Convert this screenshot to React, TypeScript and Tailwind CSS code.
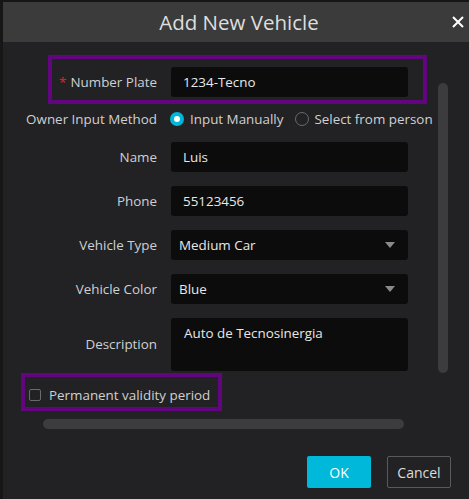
import React from 'react';

const font = { fontFamily: '"Open Sans", "Noto Sans", Arial, sans-serif' };

function Field({ label, children, required }: { label: string; children: React.ReactNode; required?: boolean }) {
  return (
    <div className="flex items-center">
      <div className="w-[154px] shrink-0 whitespace-nowrap text-right text-[13.4px] text-[#cfd0d2]">
        {required && <span className="mr-[4px] text-[#e02424]">*</span>}
        {label}
      </div>
      <div className="ml-[14px] w-[237px]">{children}</div>
    </div>
  );
}

function TextBox({ value }: { value: string }) {
  return (
    <div className="flex h-[30px] items-center rounded-[3px] bg-[#0c0c0c] px-[12px] text-[13.4px] text-[#e8e8e8]">
      {value}
    </div>
  );
}

function SelectBox({ value }: { value: string }) {
  return (
    <div className="flex h-[30px] items-center justify-between rounded-[3px] bg-[#0c0c0c] pl-[8px] pr-[13px] text-[13.4px] text-[#e8e8e8]">
      <span>{value}</span>
      <svg width="10" height="6" viewBox="0 0 10 6" aria-hidden="true">
        <path d="M0 0h10L5 6z" fill="#8a8a8a" />
      </svg>
    </div>
  );
}

export default function App() {
  return (
    <div className="h-[499px] w-[469px] bg-[#161616] pl-[3px] pt-[2px]" style={font}>
      <div className="relative flex h-full flex-col bg-[#222224]">
        {/* Header */}
        <div className="relative flex h-[40px] shrink-0 items-center justify-center bg-[#3b3b3b]">
          <span className="ml-[6px] text-[20.5px] text-[#dedede]">Add New Vehicle</span>
          <svg className="absolute right-[5px] top-[14px]" width="12" height="12" viewBox="0 0 12 12" aria-hidden="true">
            <path d="M1 1l10 10M11 1L1 11" stroke="#ffffff" strokeWidth="2" />
          </svg>
        </div>

        {/* Form */}
        <div className="flex flex-col pt-[25px]">
          <Field label="Number Plate" required>
            <TextBox value="1234-Tecno" />
          </Field>

          <div className="flex h-[45px] items-center">
            <div className="w-[154px] shrink-0 whitespace-nowrap text-right text-[13.4px] text-[#cfd0d2]">Owner Input Method</div>
            <div className="ml-[13px] flex items-center text-[13.4px] text-[#cfd0d2]">
              <span className="flex h-[14px] w-[14px] items-center justify-center rounded-full bg-[#00b6d9]">
                <span className="h-[6px] w-[6px] rounded-full bg-white" />
              </span>
              <span className="ml-[6px] whitespace-nowrap">Input Manually</span>
              <span className="ml-[12px] h-[14px] w-[14px] rounded-full border border-[#6a6a6a]" />
              <span className="ml-[5px] whitespace-nowrap">Select from person</span>
              <span className="ml-[5px] h-[14px] w-[1px] shrink-0 bg-[#2f49c8]" />
            </div>
          </div>

          <div className="flex flex-col gap-[14px]">
            <Field label="Name">
              <TextBox value="Luis" />
            </Field>
            <Field label="Phone">
              <TextBox value="55123456" />
            </Field>
            <Field label="Vehicle Type">
              <SelectBox value="Medium Car" />
            </Field>
            <Field label="Vehicle Color">
              <SelectBox value="Blue" />
            </Field>
            <Field label="Description">
              <div className="h-[53px] rounded-[3px] bg-[#0c0c0c] px-[13px] pt-[5px] text-[13.4px] text-[#e8e8e8]">
                Auto de Tecnosinergia
              </div>
            </Field>
          </div>

          <div className="ml-[26px] mt-[14px] flex items-center">
            <span className="h-[12px] w-[12px] rounded-[2px] border border-[#6a6a6a]" />
            <span className="ml-[8px] text-[13.4px] text-[#cfd0d2]">Permanent validity period</span>
          </div>

          <div className="ml-[40px] mt-[14px] h-[10px] w-[361px] rounded-full bg-[#3c3c3e]" />
        </div>

        {/* Footer */}
        <div className="mt-auto flex justify-end gap-[16px] pb-[11px] pr-[18px]">
          <button className="h-[32px] w-[64px] rounded-[2px] bg-[#00b8d9] text-[14px] text-white">OK</button>
          <button className="h-[32px] w-[64px] rounded-[2px] border border-[#5a5a5a] text-[14px] text-[#dcdcdc]">
            Cancel
          </button>
        </div>

        {/* vertical scrollbar */}
        <div className="absolute left-[435px] top-[81px] h-[290px] w-[10px] rounded-full bg-[#3c3c3e]" />

        {/* highlight annotations */}
        <div className="absolute left-[45px] top-[53px] h-[49px] w-[379px] border-[4px] border-[#62067f]" />
        <div className="absolute left-[18px] top-[371px] h-[38px] w-[201px] border-[4px] border-[#62067f]" />
      </div>
    </div>
  );
}
